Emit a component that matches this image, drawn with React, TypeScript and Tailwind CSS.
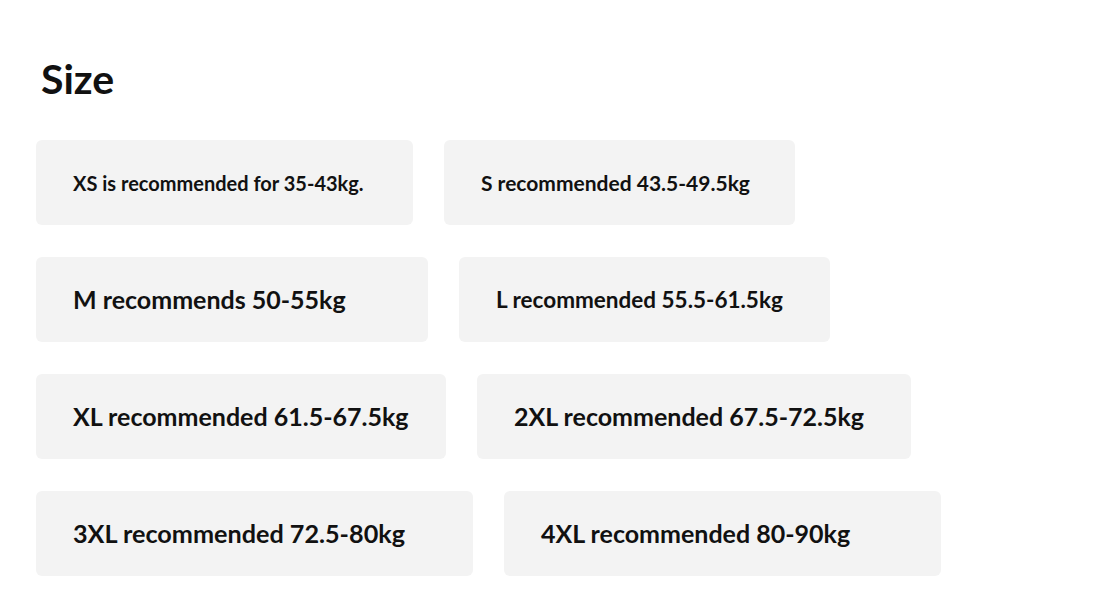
import React from "react";

type Item = { text: string; w: string; size: string };

const rows: Item[][] = [
  [
    { text: "XS is recommended for 35-43kg.", w: "w-[377px]", size: "text-[20px]" },
    { text: "S recommended 43.5-49.5kg", w: "w-[351px]", size: "text-[21px]" },
  ],
  [
    { text: "M recommends 50-55kg", w: "w-[392px]", size: "text-[25px]" },
    { text: "L recommended 55.5-61.5kg", w: "w-[371px]", size: "text-[22.5px]" },
  ],
  [
    { text: "XL recommended 61.5-67.5kg", w: "w-[410px]", size: "text-[25px]" },
    { text: "2XL recommended 67.5-72.5kg", w: "w-[434px]", size: "text-[25px]" },
  ],
  [
    { text: "3XL recommended 72.5-80kg", w: "w-[437px]", size: "text-[25.2px]" },
    { text: "4XL recommended 80-90kg", w: "w-[437px]", size: "text-[25px]" },
  ],
];

export default function App() {
  return (
    <div
      className="w-[1117px] h-[607px] bg-white text-[#111] overflow-hidden"
      style={{ fontFamily: "Lato, 'Open Sans', sans-serif" }}
    >
      <div className="pl-[36px] pt-[55px]">
        <h1 className="pl-[5px] text-[41px] leading-[48px] font-bold">Size</h1>
        <div className="mt-[37px] flex flex-col gap-[32px]">
          {rows.map((row, i) => (
            <div key={i} className="flex gap-[31px]">
              {row.map((it) => (
                <div
                  key={it.text}
                  className={`${it.w} h-[85px] rounded-[6px] bg-[#f3f3f3] flex items-center pl-[37px] font-bold ${it.size}`}
                >
                  {it.text}
                </div>
              ))}
            </div>
          ))}
        </div>
      </div>
    </div>
  );
}
